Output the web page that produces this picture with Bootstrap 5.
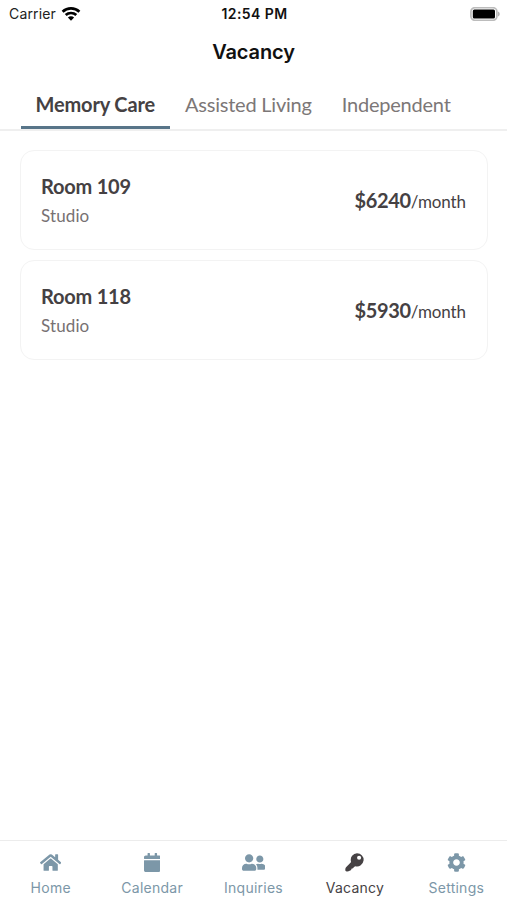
<!DOCTYPE html>
<html lang="en">
<head>
<meta charset="utf-8">
<meta name="viewport" content="width=device-width, initial-scale=1">
<title>Vacancy</title>
<link href="https://cdn.jsdelivr.net/npm/bootstrap@5.3.0/dist/css/bootstrap.min.css" rel="stylesheet">
<style>
  body { font-family: Inter, "Liberation Sans", sans-serif; background: #fff; color: #111; }
  .status { height: 27px; font-size: 14px; line-height: 28px; padding: 0 7px 0 9px; }
  .status .carrier { letter-spacing: .16px; color: #222; }
  .status .clock { font-weight: 600; letter-spacing: .4px; }
  .status svg, .dock svg { display: block; }
  .screen-title { height: 50px; line-height: 51px; font-size: 20px; font-weight: 600; letter-spacing: -.13px; }
  .tabs { height: 54px; padding-left: 20.5px; border-bottom: 2px solid #efefef; font-family: Lato, sans-serif; }
  .tabs .nav-link { height: 52px; padding: 0 15px; line-height: 54px; font-size: 20px; letter-spacing: -.22px; color: #7c7777; white-space: nowrap; border-radius: 0; }
  .tabs .nav-link.active { color: #454143; font-weight: 700; letter-spacing: -.15px; border-bottom: 3px solid #587589; }
  .rooms { padding: 19px 19px 0 20px; gap: 10px; font-family: Lato, sans-serif; }
  .room { height: 100px; padding: 1px 21px 0 20px; border: 1.5px solid #f3f3f3; border-radius: 14px; color: #454143; }
  .room-name { font-size: 20px; line-height: 25px; font-weight: 700; letter-spacing: -.22px; }
  .room-type { font-size: 17px; line-height: 24px; margin-top: 5px; letter-spacing: .12px; color: #777172; }
  .price { font-size: 17px; line-height: 28px; letter-spacing: -.1px; }
  .price strong { font-size: 20px; font-weight: 700; letter-spacing: -.35px; }
  .dock { height: 60px; border-top: 1px solid #ececec; font-size: 14px; letter-spacing: .25px; }
  .dock .nav-link { padding: 12px 0 0; color: #7c97a8; line-height: 18px; }
  .dock .nav-link.active { color: #464244; }
  .dock svg { height: 19px; margin: 0 auto 7px; fill: currentColor; }
</style>
<script src="https://cdn.jsdelivr.net/npm/bootstrap@5.3.0/dist/js/bootstrap.bundle.min.js"></script>
</head>
<body>
<div class="d-flex flex-column vh-100 overflow-hidden">
  <header>
    <div class="status d-flex align-items-center">
      <div class="col d-flex align-items-center">
        <span class="carrier">Carrier</span>
        <svg class="ms-1" width="22" height="16" viewBox="0 0 22 16" fill="none" stroke="#000" stroke-width="2.7" aria-label="Wi-Fi"><path d="M2.6 5.8a12.2 12.2 0 0 1 16.8 0M5.7 9.1a7.7 7.7 0 0 1 10.6 0"/><path d="M11 14.7 7.900 11.600a4.400 4.400 0 0 1 6.200 0z" fill="#000" stroke="none"/></svg>
      </div>
      <div class="clock">12:54 PM</div>
      <div class="col d-flex justify-content-end">
        <svg width="30" height="14" viewBox="0 0 30 14" aria-label="Battery"><rect x=".9" y=".7" width="26" height="12.600" rx="4" fill="#fff" stroke="#bcbcbc" stroke-width="1.700"/><rect x="2.800" y="2.500" width="22.200" height="9" rx="1.500" fill="#000"/><path d="M28 4.600c2.300.8 2.300 4 0 4.800z" fill="#b5b5b5"/></svg>
      </div>
    </div>
    <h1 class="screen-title text-center m-0">Vacancy</h1>
  </header>

  <nav class="tabs nav flex-nowrap">
    <a class="nav-link active" href="#">Memory Care</a>
    <a class="nav-link" href="#">Assisted Living</a>
    <a class="nav-link" href="#">Independent</a>
  </nav>

  <main class="rooms d-flex flex-column flex-grow-1">
    <div class="room d-flex justify-content-between align-items-center">
      <div><div class="room-name">Room 109</div><div class="room-type">Studio</div></div>
      <div class="price"><strong>$6240</strong>/month</div>
    </div>
    <div class="room d-flex justify-content-between align-items-center">
      <div><div class="room-name">Room 118</div><div class="room-type">Studio</div></div>
      <div class="price"><strong>$5930</strong>/month</div>
    </div>
  </main>

  <nav class="dock nav flex-nowrap text-center">
    <a class="nav-link col" href="#"><svg viewBox="0 0 576 512"><path d="M280.37 148.26L96 300.11V464a16 16 0 0 0 16 16l112.06-.29a16 16 0 0 0 15.92-16V368a16 16 0 0 1 16-16h64a16 16 0 0 1 16 16v95.64a16 16 0 0 0 16 16.05L464 480a16 16 0 0 0 16-16V300L295.67 148.26a12.19 12.19 0 0 0-15.3 0zM571.6 251.47L488 182.56V44.05a12 12 0 0 0-12-12h-56a12 12 0 0 0-12 12v72.61L318.47 43a48 48 0 0 0-61 0L4.34 251.47a12 12 0 0 0-1.6 16.9l25.5 31A12 12 0 0 0 45.15 301l235.22-193.74a12.19 12.19 0 0 1 15.3 0L530.9 301a12 12 0 0 0 16.9-1.6l25.5-31a12 12 0 0 0-1.7-16.93z"/></svg>Home</a>
    <a class="nav-link col" href="#"><svg viewBox="0 0 448 512"><path d="M12 192h424c6.600 0 12 5.400 12 12v260c0 26.500-21.500 48-48 48H48c-26.500 0-48-21.500-48-48V204c0-6.600 5.400-12 12-12zm436-44v-36c0-26.500-21.500-48-48-48h-48V12c0-6.600-5.400-12-12-12h-40c-6.600 0-12 5.400-12 12v52H160V12c0-6.600-5.400-12-12-12h-40c-6.600 0-12 5.400-12 12v52H48C21.500 64 0 85.500 0 112v36c0 6.600 5.400 12 12 12h424c6.600 0 12-5.400 12-12z"/></svg>Calendar</a>
    <a class="nav-link col" href="#"><svg viewBox="0 0 640 512"><path d="M192 256c61.9 0 112-50.1 112-112S253.900 32 192 32 80 82.100 80 144s50.100 112 112 112zm76.800 32h-8.300c-20.800 10-43.900 16-68.500 16s-47.600-6-68.500-16h-8.300C51.600 288 0 339.600 0 403.200V432c0 26.500 21.500 48 48 48h288c26.500 0 48-21.500 48-48v-28.800c0-63.600-51.600-115.200-115.200-115.200zM480 256c53 0 96-43 96-96s-43-96-96-96-96 43-96 96 43 96 96 96zm48 32h-3.800c-13.900 4.800-28.600 8-44.200 8s-30.300-3.200-44.200-8H432c-20.400 0-39.200 5.900-55.700 15.400 24.400 26.300 39.700 61.200 39.700 99.800v38.400c0 2.200-.5 4.300-.6 6.400H592c26.500 0 48-21.500 48-48 0-61.900-50.100-112-112-112z"/></svg>Inquiries</a>
    <a class="nav-link col active" href="#"><svg viewBox="0 0 19 19"><path fill-rule="evenodd" d="M12 .2a6.600 6.600 0 1 1-1.600 13c-.8.2-1.300.5-1.600 1.100-.4.900-1.100 1.300-2.100 1.300-.3 1.300-.9 2-2.100 2.200-.8.600-1.700.8-2.900.7C.7 18.500.2 17.700.3 16.500c0-1 .3-1.700 1-2.400L5.700 9.600c.3-.4.3-.8.200-1.400A6.600 6.600 0 0 1 12 .2zM14.100 2.700a2.050 2.050 0 1 0 0 4.100 2.050 2.050 0 0 0 0-4.100z"/></svg>Vacancy</a>
    <a class="nav-link col" href="#"><svg viewBox="0 0 512 512"><path d="M487.400 315.700l-42.600-24.600c4.300-23.200 4.300-47 0-70.200l42.600-24.600c4.900-2.800 7.100-8.600 5.500-14-11.100-35.600-30-67.800-54.700-94.600-3.800-4.100-10-5.100-14.800-2.300L380.800 110c-17.900-15.400-38.500-27.300-60.800-35.100V25.800c0-5.600-3.900-10.500-9.400-11.700-36.700-8.200-74.300-7.800-109.200 0-5.500 1.200-9.400 6.100-9.400 11.700V75c-22.200 7.900-42.800 19.800-60.800 35.100L88.700 85.500c-4.900-2.800-11-1.900-14.800 2.300-24.700 26.700-43.600 58.900-54.700 94.600-1.700 5.400.6 11.200 5.500 14L67.300 221c-4.300 23.200-4.300 47 0 70.200l-42.600 24.600c-4.900 2.800-7.100 8.600-5.500 14 11.100 35.600 30 67.800 54.700 94.600 3.800 4.100 10 5.100 14.800 2.300l42.600-24.600c17.900 15.400 38.500 27.300 60.800 35.100v49.200c0 5.600 3.900 10.500 9.400 11.700 36.700 8.200 74.300 7.800 109.200 0 5.500-1.200 9.400-6.100 9.400-11.700v-49.200c22.200-7.900 42.800-19.800 60.800-35.100l42.600 24.600c4.900 2.800 11 1.900 14.800-2.300 24.700-26.700 43.600-58.900 54.700-94.600 1.500-5.500-.7-11.300-5.600-14.100zM256 346c-49.700 0-90-40.300-90-90s40.300-90 90-90 90 40.300 90 90-40.300 90-90 90z"/></svg>Settings</a>
  </nav>
</div>
</body>
</html>
